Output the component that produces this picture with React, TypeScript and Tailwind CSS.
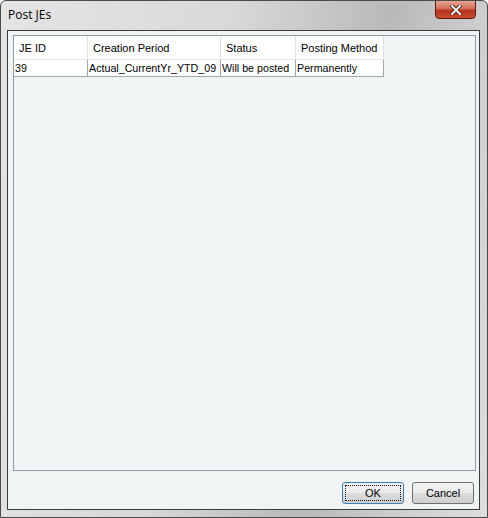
import React from 'react';

const rows = [
  { id: '39', period: 'Actual_CurrentYr_YTD_09', status: 'Will be posted', method: 'Permanently' },
];

const cols = [
  { label: 'JE ID', w: 'w-[74px]' },
  { label: 'Creation Period', w: 'w-[133px]' },
  { label: 'Status', w: 'w-[75px]' },
  { label: 'Posting Method', w: 'w-[88px]' },
];

export default function App() {
  return (
    <div
      className="w-[488px] h-[518px] flex flex-col rounded-t-[6px] border border-[#4a4a4a] bg-[linear-gradient(100deg,#e4e4e4_0%,#d9d9d9_40%,#b9b9b9_68%,#cfcfcf_85%,#dedede_100%)] pl-[6px] pr-[7px] pb-[7px] overflow-hidden"
      style={{ fontFamily: '"Liberation Sans", Arial, sans-serif' }}
    >
      {/* title bar */}
      <div className="h-[29px] flex items-start justify-between shrink-0">
        <span className="mt-[5px] ml-[1px] text-[12px] text-black" style={{ fontFamily: '"Segoe UI", "Open Sans", sans-serif' }}>
          Post JEs
        </span>
        <div className="w-[41px] h-[19px] -mt-px mr-[4px] rounded-b-[4px] border border-[#5b1a12] bg-[linear-gradient(180deg,#e8a493_0%,#d2705d_45%,#b8321c_55%,#c74b31_100%)] flex items-center justify-center">
          <svg width="12" height="10" viewBox="0 0 12 10">
            <path d="M2 1 L10 9 M10 1 L2 9" stroke="#3d1c14" strokeWidth="3.6" strokeLinecap="square" />
            <path d="M2 1 L10 9 M10 1 L2 9" stroke="#ffffff" strokeWidth="2" strokeLinecap="square" />
          </svg>
        </div>
      </div>

      {/* client area */}
      <div className="flex-1 flex flex-col border border-[#3a3a3a] bg-[#f0f4f5] pl-[5px] pr-[3px] pt-[4px] pb-[5px]">
        <div className="flex-1 border border-[#8c9da6] bg-[#f0f4f5] text-[11px] text-black whitespace-nowrap">
          <div className="flex h-[24px] bg-white w-[370px] border-b border-[#e3e6e8]">
            {cols.map((c) => (
              <div key={c.label} className={`${c.w} shrink-0 flex items-center pl-[5px] pt-[2px] border-r border-[#e0e3e5]`}>
                {c.label}
              </div>
            ))}
          </div>
          {rows.map((r) => (
            <div key={r.id} className="flex h-[17px] bg-white w-[370px] border-b border-r border-[#a0a8ae] text-[10.7px]">
              <div className="w-[74px] shrink-0 pl-[1px] leading-[16px] border-r border-[#a0a8ae]">{r.id}</div>
              <div className="w-[133px] shrink-0 pl-[1px] leading-[16px] border-r border-[#a0a8ae] overflow-hidden">{r.period}</div>
              <div className="w-[75px] shrink-0 pl-[1px] leading-[16px] border-r border-[#a0a8ae] overflow-hidden">{r.status}</div>
              <div className="w-[87px] shrink-0 pl-[1px] leading-[16px]">{r.method}</div>
            </div>
          ))}
        </div>

        {/* buttons */}
        <div className="flex justify-end gap-[8px] mt-[11px] pr-[2px]">
          <button className="w-[62px] h-[22px] rounded-[3px] border border-[#3c7fb1] bg-[linear-gradient(180deg,#f2f2f2_0%,#ebebeb_48%,#dddddd_52%,#cfcfcf_100%)] p-[2px] text-[11px] text-black">
            <span className="block h-full border border-dotted border-[#1a1a1a] leading-[14px]">OK</span>
          </button>
          <button className="w-[62px] h-[22px] rounded-[3px] border border-[#707070] bg-[linear-gradient(180deg,#f2f2f2_0%,#ebebeb_48%,#dddddd_52%,#cfcfcf_100%)] text-[11px] text-black">
            Cancel
          </button>
        </div>
      </div>
    </div>
  );
}
